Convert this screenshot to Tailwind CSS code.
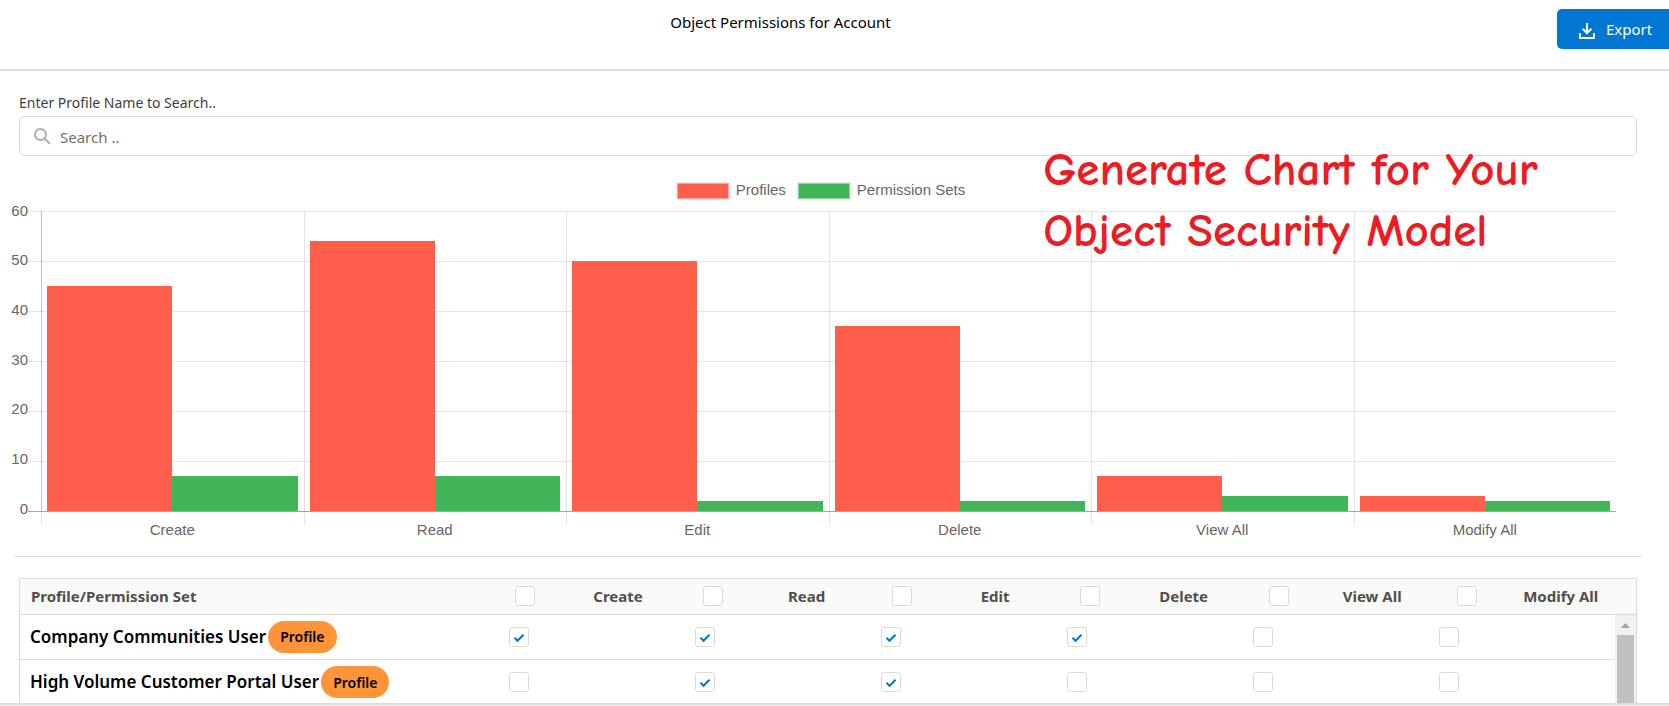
<!DOCTYPE html>
<html lang="en">
<head>
<meta charset="utf-8">
<title>Object Permissions for Account</title>
<script src="https://cdn.jsdelivr.net/npm/@tailwindcss/browser@4"></script>
</head>
<body class="h-screen overflow-hidden bg-white font-['Segoe_UI','Noto_Sans',sans-serif] text-[15px] text-[#080707]">
<div class="flex h-full flex-col">
  <header class="flex h-[71px] shrink-0 items-start border-b-2 border-[#dddbda]">
    <h1 class="flex-1 pt-3 pl-1 text-center leading-5 text-black">Object Permissions for Account</h1>
    <button type="button" class="mt-[9px] flex h-10 w-28 items-center gap-[11px] rounded-l-[5px] bg-[#0176d3] pl-[22px] text-[15px] text-white">
      <svg class="mt-1 size-4" viewBox="0 0 16 16" fill="none" stroke="currentColor" stroke-width="2" aria-hidden="true"><path d="M8 0v9M3.600 5.800L8 10l4.400-4.200M1 10v5h14v-5"/></svg>
      Export
    </button>
  </header>

  <main class="min-h-0 flex-1 overflow-hidden">
    <section class="mr-8 ml-[19px] pt-[22px]">
      <label for="search" class="block h-[23px] text-[14px] leading-5 text-[#3e3e3c]">Enter Profile Name to Search..</label>
      <div class="flex h-10 items-center gap-2 rounded-[5px] border border-[#dddbda] pl-[14px]">
        <svg class="size-[17px] shrink-0" viewBox="0 0 17 17" fill="none" stroke="#b0adab" stroke-width="2" stroke-linecap="round" aria-hidden="true"><circle cx="6.500" cy="6.500" r="5.500"/><path d="M10.700 10.700L15.500 15.300"/></svg>
        <input id="search" type="text" placeholder="Search .." class="h-full flex-1 pt-px pl-px text-[15px] outline-none placeholder:text-[#706e6b]">
      </div>
    </section>

    <section class="relative pt-[26px] font-['Liberation_Sans',Arial,sans-serif] text-[15px] text-[#666]" aria-label="Permissions chart">
      <div class="flex h-[18px] items-center justify-center gap-[11px] pr-7">
        <span class="flex items-center gap-[6px] leading-4"><i class="mx-px h-4 w-[52px] border border-[#f5a59c] bg-[#ff5e4d] ring-1 ring-[#eeeeee]"></i><span class="pb-0.5">Profiles</span></span>
        <span class="flex items-center gap-[6px] leading-4"><i class="mx-px h-4 w-[52px] border border-[#95d0a1] bg-[#41b658] ring-1 ring-[#eeeeee]"></i><span class="pb-0.5">Permission Sets</span></span>
      </div>
      <div class="mt-[11px] mr-[53px] flex">
        <div class="flex h-[298px] w-7 flex-col justify-between text-right">
          <span class="flex h-0 items-center justify-end">60</span>
          <span class="flex h-0 items-center justify-end">50</span>
          <span class="flex h-0 items-center justify-end">40</span>
          <span class="flex h-0 items-center justify-end">30</span>
          <span class="flex h-0 items-center justify-end">20</span>
          <span class="flex h-0 items-center justify-end">10</span>
          <span class="flex h-0 items-center justify-end">0</span>
        </div>
        <div class="grid flex-1">
          <div class="col-start-1 row-start-1 h-[301px]">
            <div class="h-[50px] border-t border-black/10"></div>
            <div class="h-[50px] border-t border-black/10"></div>
            <div class="h-[50px] border-t border-black/10"></div>
            <div class="h-[50px] border-t border-black/10"></div>
            <div class="h-[50px] border-t border-black/10"></div>
            <div class="h-[50px] border-t border-black/10"></div>
            <div class="border-t border-black/35"></div>
          </div>
          <div class="col-start-1 row-start-1 ml-[13px] grid grid-cols-6">
            <div class="flex flex-col">
              <div class="flex h-[300px] items-end border-l border-black/25 pr-[6px] pl-[5px]"><i class="w-1/2 bg-[#ff5e4d]" style="height:225px"></i><i class="w-1/2 bg-[#41b658]" style="height:35px"></i></div>
              <div class="h-[14px] border-l border-black/10"></div>
            </div>
            <div class="flex flex-col">
              <div class="flex h-[300px] items-end border-l border-black/10 pr-[6px] pl-[5px]"><i class="w-1/2 bg-[#ff5e4d]" style="height:270px"></i><i class="w-1/2 bg-[#41b658]" style="height:35px"></i></div>
              <div class="h-[14px] border-l border-black/10"></div>
            </div>
            <div class="flex flex-col">
              <div class="flex h-[300px] items-end border-l border-black/10 pr-[6px] pl-[5px]"><i class="w-1/2 bg-[#ff5e4d]" style="height:250px"></i><i class="w-1/2 bg-[#41b658]" style="height:10px"></i></div>
              <div class="h-[14px] border-l border-black/10"></div>
            </div>
            <div class="flex flex-col">
              <div class="flex h-[300px] items-end border-l border-black/10 pr-[6px] pl-[5px]"><i class="w-1/2 bg-[#ff5e4d]" style="height:185px"></i><i class="w-1/2 bg-[#41b658]" style="height:10px"></i></div>
              <div class="h-[14px] border-l border-black/10"></div>
            </div>
            <div class="flex flex-col">
              <div class="flex h-[300px] items-end border-l border-black/10 pr-[6px] pl-[5px]"><i class="w-1/2 bg-[#ff5e4d]" style="height:35px"></i><i class="w-1/2 bg-[#41b658]" style="height:15px"></i></div>
              <div class="h-[14px] border-l border-black/10"></div>
            </div>
            <div class="flex flex-col">
              <div class="flex h-[300px] items-end border-l border-black/10 pr-[6px] pl-[5px]"><i class="w-1/2 bg-[#ff5e4d]" style="height:15px"></i><i class="w-1/2 bg-[#41b658]" style="height:10px"></i></div>
              <div class="h-[14px] border-l border-black/10"></div>
            </div>
          </div>
        </div>
      </div>
      <div class="mr-[53px] ml-[41px] grid h-[31px] grid-cols-6 text-center leading-[9px]">
        <span>Create</span><span>Read</span><span>Edit</span><span>Delete</span><span>View All</span><span>Modify All</span>
      </div>
      <p class="absolute -top-4 left-[62.500%] font-['Comic_Sans_MS','Comic_Neue',Lato,cursive] text-[47px] leading-[61px] font-bold whitespace-nowrap text-[#ed1c24]">Generate Chart for Your<br>Object Security Model</p>
    </section>

    <hr class="mr-[27px] ml-[14px] border-[#dddbda]">

    <section class="mt-[21px] mr-8 ml-[19px] border border-[#dddbda]">
      <table class="w-full table-fixed border-collapse">
        <thead>
          <tr class="h-[35px] border-b border-[#dddbda] bg-[#fafaf9] text-left text-[#514f4d]">
            <th scope="col" class="w-[30%] pl-[11px] font-bold">Profile/Permission Set</th>
            <th scope="col" class="pl-[10px]"><label class="flex items-center"><input type="checkbox" class="size-5 appearance-none rounded-[3px] border border-[#dddbda] bg-white"><span class="flex-1 pl-2 text-center">Create</span></label></th>
            <th scope="col" class="pl-[10px]"><label class="flex items-center"><input type="checkbox" class="size-5 appearance-none rounded-[3px] border border-[#dddbda] bg-white"><span class="flex-1 pl-2 text-center">Read</span></label></th>
            <th scope="col" class="pl-[10px]"><label class="flex items-center"><input type="checkbox" class="size-5 appearance-none rounded-[3px] border border-[#dddbda] bg-white"><span class="flex-1 pl-2 text-center">Edit</span></label></th>
            <th scope="col" class="pl-[10px]"><label class="flex items-center"><input type="checkbox" class="size-5 appearance-none rounded-[3px] border border-[#dddbda] bg-white"><span class="flex-1 pl-2 text-center">Delete</span></label></th>
            <th scope="col" class="pl-[10px]"><label class="flex items-center"><input type="checkbox" class="size-5 appearance-none rounded-[3px] border border-[#dddbda] bg-white"><span class="flex-1 pl-2 text-center">View All</span></label></th>
            <th scope="col" class="pl-[10px]"><label class="flex items-center"><input type="checkbox" class="size-5 appearance-none rounded-[3px] border border-[#dddbda] bg-white"><span class="flex-1 pl-2 text-center">Modify All</span></label></th>
          </tr>
        </thead>
      </table>
      <div class="flex">
        <table class="flex-1 table-fixed border-collapse">
          <tbody>
            <tr class="h-[45px] border-b border-[#dddbda]">
              <th scope="row" class="w-[30%] pl-[10px] text-left"><div class="flex items-center gap-[2px] text-[17px] font-semibold whitespace-nowrap text-black">Company Communities User <span class="flex h-8 items-center rounded-full bg-[#ff9538] px-3 text-[14px]">Profile</span></div></th>
              <td class="pl-[10px]"><span class="grid w-5"><input type="checkbox" checked aria-label="Create" class="col-start-1 row-start-1 size-5 appearance-none rounded-[3px] border border-[#dddbda] bg-white"><svg class="pointer-events-none col-start-1 row-start-1 size-5" viewBox="0 0 20 20" fill="none" stroke="#0176d3" stroke-width="2"><path d="M5.500 10.800L8.500 13.800L14.500 7.800"/></svg></span></td>
              <td class="pl-[10px]"><span class="grid w-5"><input type="checkbox" checked aria-label="Read" class="col-start-1 row-start-1 size-5 appearance-none rounded-[3px] border border-[#dddbda] bg-white"><svg class="pointer-events-none col-start-1 row-start-1 size-5" viewBox="0 0 20 20" fill="none" stroke="#0176d3" stroke-width="2"><path d="M5.500 10.800L8.500 13.800L14.500 7.800"/></svg></span></td>
              <td class="pl-[10px]"><span class="grid w-5"><input type="checkbox" checked aria-label="Edit" class="col-start-1 row-start-1 size-5 appearance-none rounded-[3px] border border-[#dddbda] bg-white"><svg class="pointer-events-none col-start-1 row-start-1 size-5" viewBox="0 0 20 20" fill="none" stroke="#0176d3" stroke-width="2"><path d="M5.500 10.800L8.500 13.800L14.500 7.800"/></svg></span></td>
              <td class="pl-[10px]"><span class="grid w-5"><input type="checkbox" checked aria-label="Delete" class="col-start-1 row-start-1 size-5 appearance-none rounded-[3px] border border-[#dddbda] bg-white"><svg class="pointer-events-none col-start-1 row-start-1 size-5" viewBox="0 0 20 20" fill="none" stroke="#0176d3" stroke-width="2"><path d="M5.500 10.800L8.500 13.800L14.500 7.800"/></svg></span></td>
              <td class="pl-[10px]"><span class="grid w-5"><input type="checkbox" aria-label="View All" class="size-5 appearance-none rounded-[3px] border border-[#dddbda] bg-white"></span></td>
              <td class="pl-[10px]"><span class="grid w-5"><input type="checkbox" aria-label="Modify All" class="size-5 appearance-none rounded-[3px] border border-[#dddbda] bg-white"></span></td>
            </tr>
            <tr class="h-[45px] border-b border-[#dddbda]">
              <th scope="row" class="pl-[10px] text-left"><div class="flex items-center gap-[2px] text-[17px] font-semibold whitespace-nowrap text-black">High Volume Customer Portal User <span class="flex h-8 items-center rounded-full bg-[#ff9538] px-3 text-[14px]">Profile</span></div></th>
              <td class="pl-[10px]"><span class="grid w-5"><input type="checkbox" aria-label="Create" class="size-5 appearance-none rounded-[3px] border border-[#dddbda] bg-white"></span></td>
              <td class="pl-[10px]"><span class="grid w-5"><input type="checkbox" checked aria-label="Read" class="col-start-1 row-start-1 size-5 appearance-none rounded-[3px] border border-[#dddbda] bg-white"><svg class="pointer-events-none col-start-1 row-start-1 size-5" viewBox="0 0 20 20" fill="none" stroke="#0176d3" stroke-width="2"><path d="M5.500 10.800L8.500 13.800L14.500 7.800"/></svg></span></td>
              <td class="pl-[10px]"><span class="grid w-5"><input type="checkbox" checked aria-label="Edit" class="col-start-1 row-start-1 size-5 appearance-none rounded-[3px] border border-[#dddbda] bg-white"><svg class="pointer-events-none col-start-1 row-start-1 size-5" viewBox="0 0 20 20" fill="none" stroke="#0176d3" stroke-width="2"><path d="M5.500 10.800L8.500 13.800L14.500 7.800"/></svg></span></td>
              <td class="pl-[10px]"><span class="grid w-5"><input type="checkbox" aria-label="Delete" class="size-5 appearance-none rounded-[3px] border border-[#dddbda] bg-white"></span></td>
              <td class="pl-[10px]"><span class="grid w-5"><input type="checkbox" aria-label="View All" class="size-5 appearance-none rounded-[3px] border border-[#dddbda] bg-white"></span></td>
              <td class="pl-[10px]"><span class="grid w-5"><input type="checkbox" aria-label="Modify All" class="size-5 appearance-none rounded-[3px] border border-[#dddbda] bg-white"></span></td>
            </tr>
          </tbody>
        </table>
        <div class="flex w-[21px] flex-col items-center bg-[#f1f1f1] px-[2px]" aria-hidden="true">
          <svg class="h-5 w-[9px] shrink-0" viewBox="0 0 9 20" fill="#a3a3a3"><path d="M0 13L4.500 8L9 13z"/></svg>
          <div class="w-full flex-1 bg-[#c1c1c1]"></div>
        </div>
      </div>
    </section>
  </main>
  <footer class="h-[3px] shrink-0 border-t-2 border-[#dddbda] bg-[#f3f2f2]"></footer>
</div>
</body>
</html>
